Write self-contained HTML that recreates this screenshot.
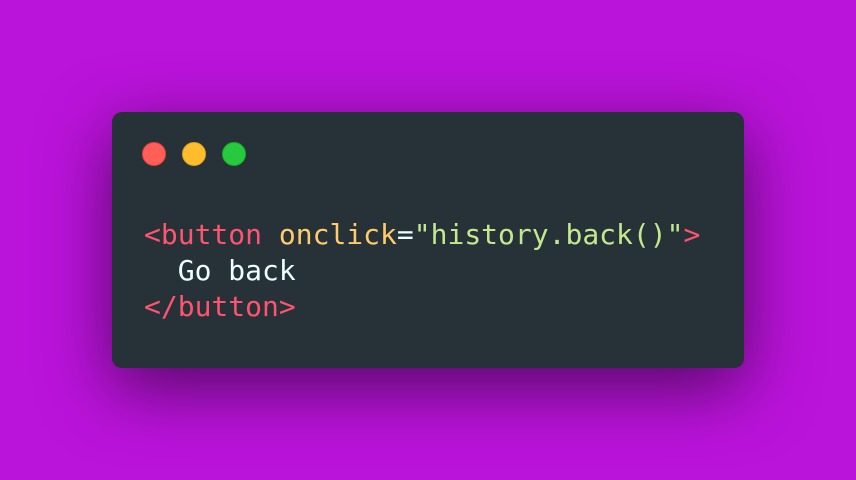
<!DOCTYPE html>
<html><head><style>
html,body{margin:0;width:856px;height:480px;overflow:hidden;background:#ba13da;}
.card{position:absolute;left:112px;top:112px;width:632px;height:256px;background:#263238;border-radius:10px;box-shadow:0 20px 68px rgba(0,0,0,0.55);}
.dot{position:absolute;top:30px;width:24px;height:24px;border-radius:50%;box-sizing:border-box;}
pre{position:absolute;left:32px;top:105px;margin:0;font-family:"DejaVu Sans Mono","Liberation Mono",monospace;font-size:28px;line-height:36px;color:#eeffff;}
.a{color:#ffcb6b}.s{color:#c3e88d}
</style></head><body>
<div class="card">
<div class="dot" style="left:30px;background:#ff5f56;border:1px solid #e0443e"></div>
<div class="dot" style="left:70px;background:#ffbd2e;border:1px solid #dea123"></div>
<div class="dot" style="left:110px;background:#27c93f;border:1px solid #1aab29"></div>
<pre><span style="color:#ff5370">&lt;button</span> <span class="a">onclick</span>=<span class="s">"history.back()"</span><span style="color:#ff5370">&gt;</span>
  Go back
<span style="color:#ff5370">&lt;/button&gt;</span></pre>
</div>
</body></html>
